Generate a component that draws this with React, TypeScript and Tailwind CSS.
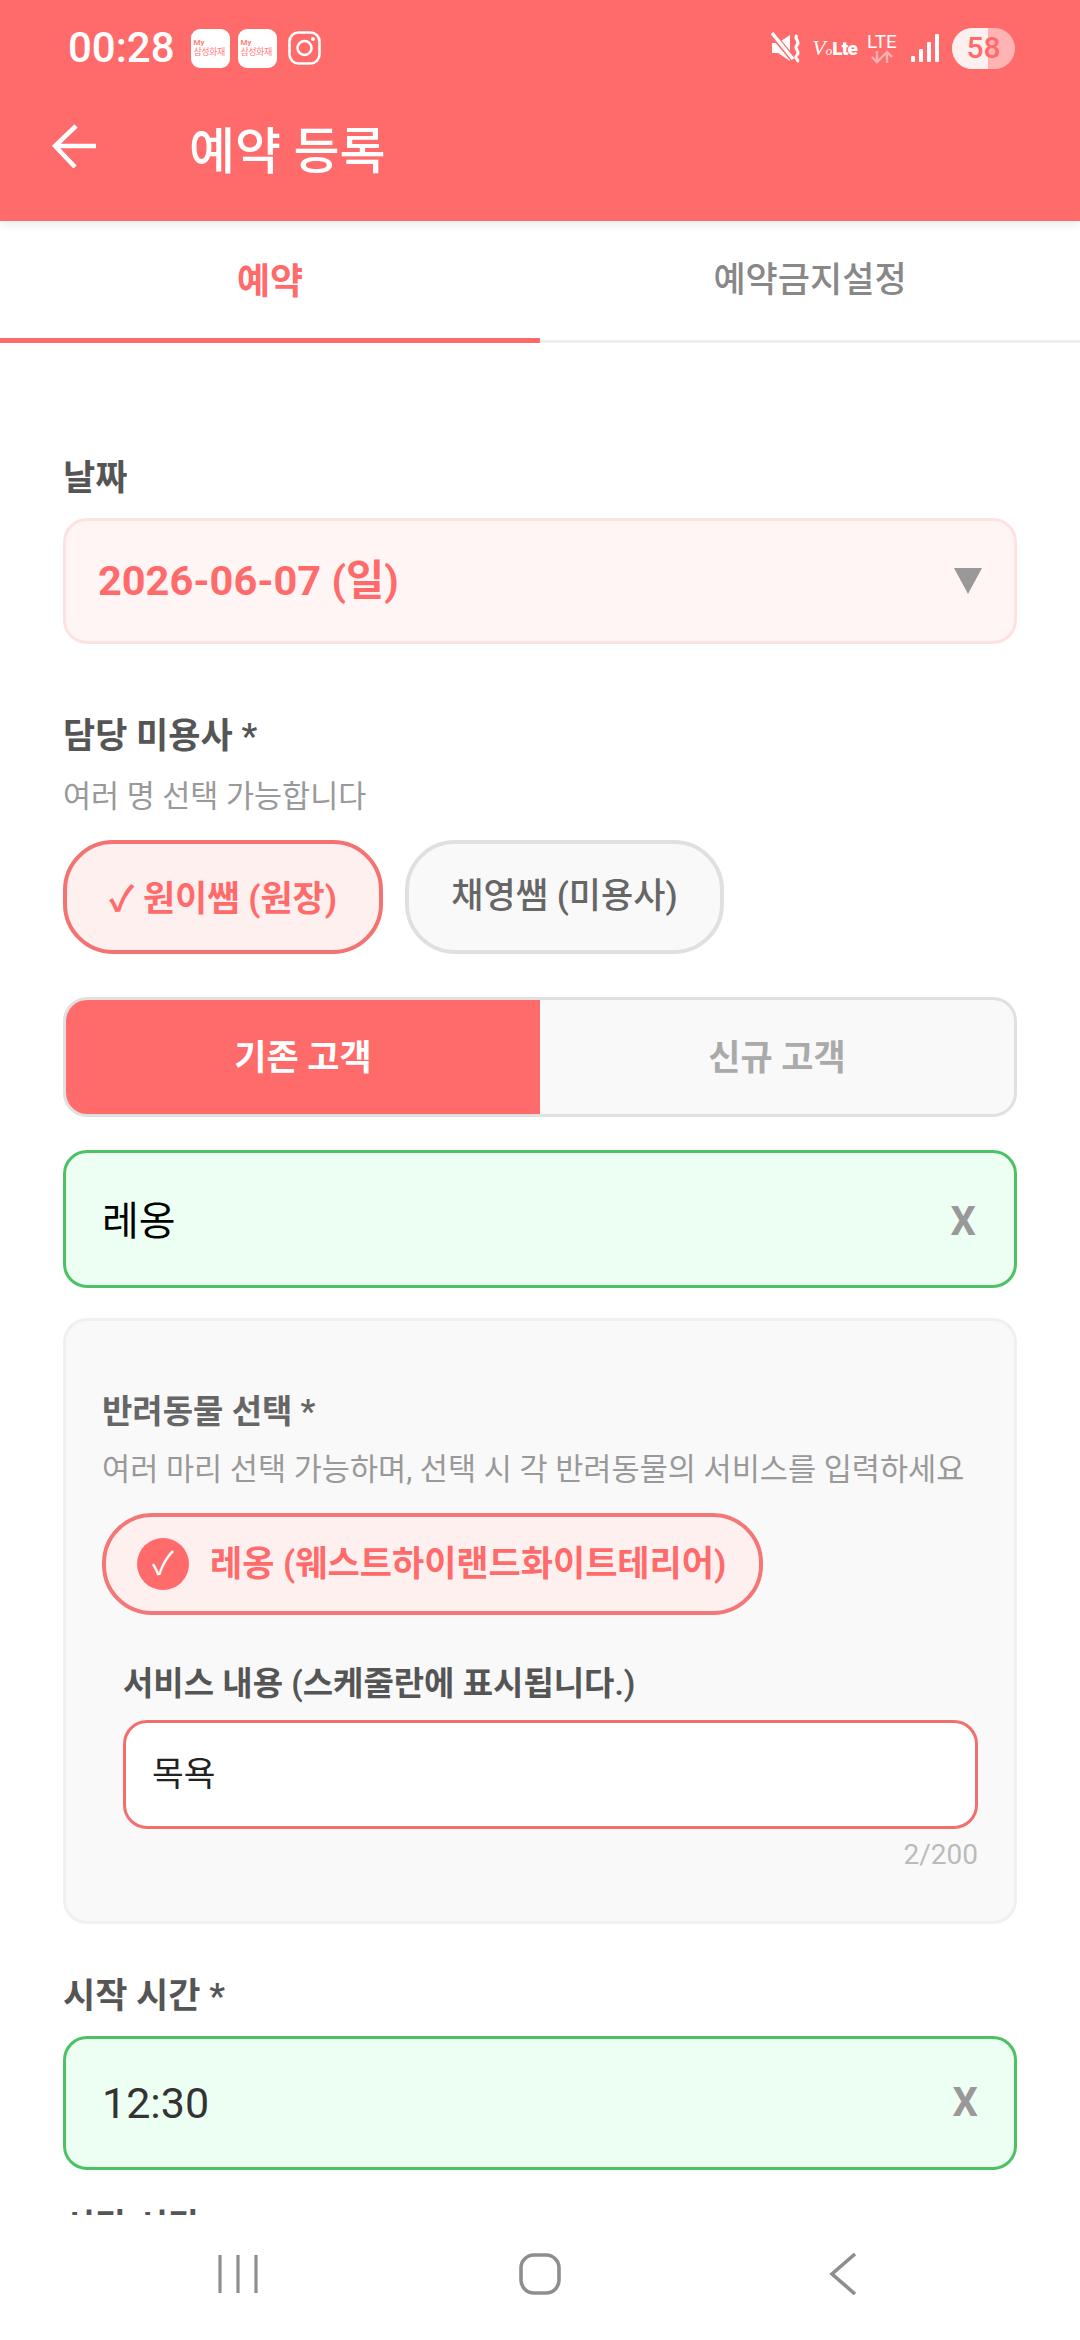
const font = "font-['Roboto','Noto_Sans_CJK_KR',sans-serif]";

function SamsungBadge() {
  return (
    <span className="flex h-[39px] w-[39px] flex-col justify-center rounded-[9px] bg-white pl-[3px] text-[#ff8080]">
      <span className="text-[8px] leading-[9px] font-bold">My</span>
      <span className="text-[9px] leading-[11px] tracking-[-0.5px] whitespace-nowrap">삼성화재</span>
    </span>
  );
}

function StatusBar() {
  return (
    <div className="flex h-[96px] items-center justify-between pr-[65px] pl-[68px] text-white">
      <div className="flex items-center">
        <span className="mr-[16px] text-[42px] leading-none font-medium">00:28</span>
        <SamsungBadge />
        <span className="w-[8px]" />
        <SamsungBadge />
        <svg className="ml-[11px]" width="33" height="34" viewBox="0 0 33 34" fill="none" stroke="white" strokeWidth="2.6">
          <rect x="1.5" y="1.5" width="30" height="31" rx="9" />
          <circle cx="16.5" cy="17" r="7" />
          <circle cx="25" cy="8" r="2" fill="white" stroke="none" />
        </svg>
      </div>
      <div className="flex items-center">
        <svg width="32" height="32" viewBox="0 0 32 32" fill="white">
          <path d="M1 11h6l12-8v26l-12-8H1z" />
          <path d="M2 3l20 24" stroke="#ff6b6b" strokeWidth="6" />
          <path d="M1 1l21 26" stroke="white" strokeWidth="3.4" />
          <path d="M26 3c-4 4 4 6 0 10s4 6 0 10s3 4 0 7" fill="none" stroke="white" strokeWidth="3" />
        </svg>
        <span className="ml-[9px] flex items-baseline text-white">
          <span className="font-['Liberation_Serif',serif] text-[22px] leading-none italic">V</span>
          <span className="font-['Liberation_Serif',serif] text-[13px] leading-none italic">o</span>
          <span className="text-[19px] leading-none font-black tracking-[-0.8px]">Lte</span>
        </span>
        <span className="ml-[9px] flex w-[32px] flex-col items-center">
          <span className="text-[19px] leading-[17px]">LTE</span>
          <svg width="24" height="14" viewBox="0 0 24 14" fill="none" stroke="#ffb0b0" strokeWidth="2.4">
            <path d="M7 1v11M2 7l5 5 5-5M17 13V2M12 7l5-5 5 5" />
          </svg>
        </span>
        <svg className="ml-[12px]" width="30" height="30" viewBox="0 0 30 30" fill="white">
          <rect x="1" y="23" width="4" height="6" rx="1" />
          <rect x="9" y="16" width="4" height="13" rx="1" />
          <rect x="17" y="9" width="4" height="20" rx="1" />
          <rect x="25" y="1" width="4" height="28" rx="1" />
        </svg>
        <span className="relative ml-[12px] flex h-[41px] w-[63px] items-center justify-center overflow-hidden rounded-full bg-[#ffb3b3] text-[#ff6b6b]">
          <span className="absolute inset-y-0 left-0 w-[36px] bg-[#fff0f0]" />
          <span className="relative text-[30px] leading-none font-medium">58</span>
        </span>
      </div>
    </div>
  );
}

function Header() {
  return (
    <header className="relative z-10 h-[221px] shrink-0 bg-[#ff6b6b] shadow-[0_3px_10px_rgba(0,0,0,0.09)]">
      <StatusBar />
      <div className="flex h-[100px] items-center pl-[52px]">
        <svg width="44" height="44" viewBox="0 0 44 44" fill="none" stroke="white" strokeWidth="4.5">
          <path d="M44 22H3M24 2L3 22l20 21" />
        </svg>
        <h1 className="ml-[93px] pt-[12px] text-[50px] leading-none font-medium text-white">예약 등록</h1>
      </div>
    </header>
  );
}

function Tabs() {
  return (
    <div className="flex h-[122px] shrink-0 border-b-[3px] border-[#eeeeee] bg-white">
      <div className="-mb-[3px] flex w-1/2 items-center justify-center border-b-[5px] border-[#ff6b6b] pt-[4px] text-[36px] font-bold text-[#ff6b6b]">
        예약
      </div>
      <div className="flex w-1/2 items-center justify-center pt-[2px] text-[35px] font-medium text-[#888888]">
        예약금지설정
      </div>
    </div>
  );
}

function GreenField({ value, className }: { value: string; className: string }) {
  return (
    <div className={`flex items-center justify-between rounded-[24px] border-[3px] border-[#4cc265] bg-[#edfff3] ${className}`}>
      <span>{value}</span>
      <span className="text-[40px] leading-none font-bold text-[#999999]">X</span>
    </div>
  );
}

export default function App() {
  return (
    <div className={`flex h-[2340px] w-[1080px] flex-col overflow-hidden bg-white ${font}`}>
      <Header />
      <Tabs />
      <main className="min-h-0 flex-1 overflow-hidden px-[63px] pt-[114px]">
        <div className="text-[35px] leading-[44px] font-semibold text-[#555555]">날짜</div>
        <div className="mt-[17px] flex h-[126px] items-center justify-between rounded-[24px] border-[3px] border-[#fde2e2] bg-[#fff5f5] px-[32px]">
          <span className="text-[41.5px] font-bold text-[#ff6b6b]">2026-06-07 (일)</span>
          <span className="h-0 w-0 border-x-[14px] border-t-[26px] border-x-transparent border-t-[#999999]" />
        </div>

        <div className="mt-[71px] text-[35px] leading-[44px] font-semibold text-[#555555]">담당 미용사 *</div>
        <div className="mt-[18px] text-[30.5px] leading-[40px] text-[#999999]">여러 명 선택 가능합니다</div>
        <div className="mt-[23px] flex gap-[22px]">
          <div className="flex h-[114px] w-[320px] items-center justify-center rounded-[50px] border-[4px] border-[#f47272] bg-[#fff0f0] pt-[6px] text-[35px] font-bold text-[#ff6b6b]">
            ✓ 원이쌤 (원장)
          </div>
          <div className="flex h-[114px] w-[319px] items-center justify-center rounded-[50px] border-[4px] border-[#e0e0e0] bg-[#f9f9f9] text-[35px] font-medium text-[#666666]">
            채영쌤 (미용사)
          </div>
        </div>

        <div className="mt-[43px] flex h-[120px] overflow-hidden rounded-[24px] border-[3px] border-[#e0e0e0] bg-[#f9f9f9] text-[35px] font-bold">
          <div className="flex w-1/2 items-center justify-center bg-[#ff6b6b] pt-[5px] text-white">기존 고객</div>
          <div className="flex w-1/2 items-center justify-center pt-[5px] text-[#aaaaaa]">신규 고객</div>
        </div>

        <GreenField value="레옹" className="mt-[33px] h-[138px] pt-[5px] pr-[38px] pl-[36px] text-[40px] text-black" />

        <section className="mt-[30px] h-[606px] rounded-[24px] border-[3px] border-[#f0f0f0] bg-[#f9f9f9] px-[36px] pt-[69px]">
          <div className="text-[33px] leading-[44px] font-semibold text-[#666666]">반려동물 선택 *</div>
          <div className="mt-[16px] text-[30.6px] leading-[40px] whitespace-nowrap text-[#999999]">
            여러 마리 선택 가능하며, 선택 시 각 반려동물의 서비스를 입력하세요
          </div>
          <div className="mt-[23px] flex h-[102px] w-[661px] items-center rounded-[50px] border-[4px] border-[#f47676] bg-[#fff0f0] pl-[31px]">
            <span className="flex size-[52px] items-center justify-center rounded-full bg-[#ff6b6b] text-[32px] leading-none text-white">
              ✓
            </span>
            <span className="ml-[21px] text-[35px] leading-none font-bold whitespace-nowrap text-[#ff6b6b]">
              레옹 (웨스트하이랜드화이트테리어)
            </span>
          </div>
          <div className="mt-[47px] pl-[21px]">
            <div className="text-[33px] leading-[44px] font-semibold text-[#555555]">서비스 내용 (스케줄란에 표시됩니다.)</div>
            <div className="mt-[14px] flex h-[109px] items-center rounded-[24px] border-[3px] border-[#f07070] bg-white pl-[26px] text-[34.5px] text-[#222222]">
              목욕
            </div>
            <div className="mt-[8px] text-right text-[28px] leading-[36px] text-[#bbbbbb]">2/200</div>
          </div>
        </section>

        <div className="mt-[50px] text-[35px] leading-[46px] font-semibold text-[#555555]">시작 시간 *</div>
        <GreenField value="12:30" className="mt-[16px] h-[134px] px-[36px] text-[43px] text-[#333333]" />
        <div className="mt-[35px] text-[35px] leading-[46px] font-semibold text-[#555555]">시간 시간</div>
      </main>
      <nav className="relative z-10 flex h-[125px] shrink-0 items-center justify-center bg-white pb-[7px]">
        <div className="flex w-[645px] items-center justify-between text-[#8e8e8e]">
          <svg width="40" height="40" viewBox="0 0 40 40" fill="none" stroke="currentColor" strokeWidth="3.2">
            <path d="M2 1v38M20 1v38M38 1v38" />
          </svg>
          <svg width="42" height="42" viewBox="0 0 42 42" fill="none" stroke="currentColor" strokeWidth="3.6">
            <rect x="2" y="2" width="38" height="38" rx="13" />
          </svg>
          <svg width="40" height="42" viewBox="-6 0 40 42" fill="none" stroke="currentColor" strokeWidth="3.6">
            <path d="M26 1L3 21l23 20" />
          </svg>
        </div>
      </nav>
    </div>
  );
}
